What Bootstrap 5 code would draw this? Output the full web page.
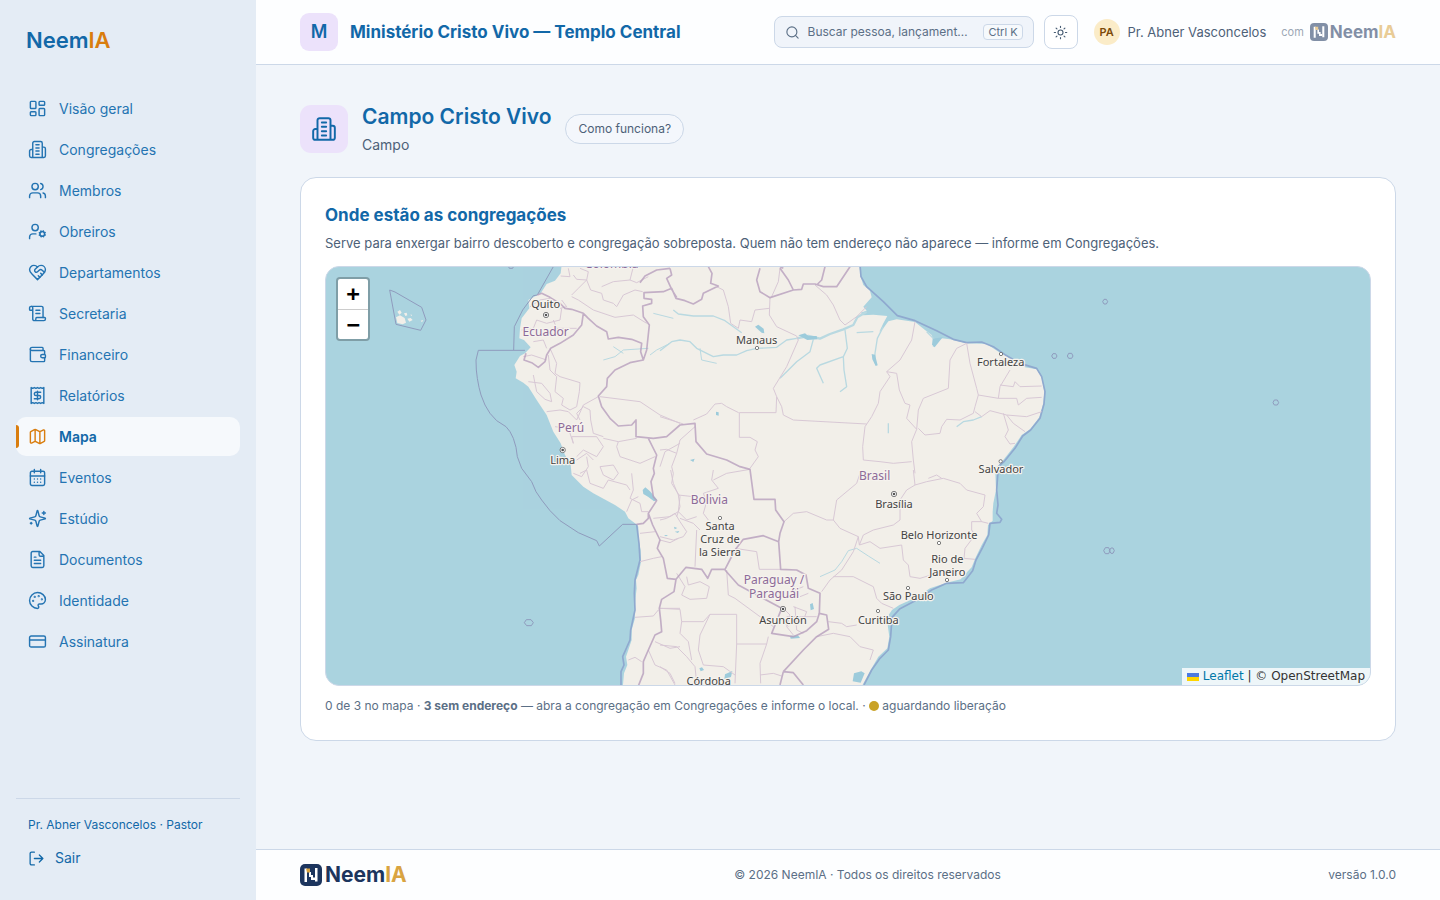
<!DOCTYPE html>
<html lang="pt-BR">
<head>
<meta charset="utf-8">
<meta name="viewport" content="width=device-width, initial-scale=1">
<title>Mapa · NeemIA</title>
<link href="https://cdn.jsdelivr.net/npm/bootstrap@5.3.0/dist/css/bootstrap.min.css" rel="stylesheet">
<style>
:root{--azul:#1268a8;--linha:#ccd8e8;--texto:#4d6178;--fundo:#f1f5fa;--laranja:#d97d0e;--marinho:#1c355e;--ouro:#d9a441}
body{font-family:Inter,"Liberation Sans",sans-serif;font-size:14px;line-height:20px;color:var(--texto);background:var(--fundo)}
a{text-decoration:none;color:inherit}
.ico{width:19px;height:19px;flex:none;fill:none;stroke:currentColor;stroke-width:1.8;stroke-linecap:round;stroke-linejoin:round}
.ico-sm{width:15px;height:15px}
.titulo{font-family:Inter,sans-serif;font-weight:600;color:var(--azul);margin:0}
/* menu lateral */
.lateral{width:256px;flex:none;height:100vh;top:0;background:#e4ecf5;color:var(--azul);padding:24px 16px}
.marca{font-size:22px;line-height:32px;font-weight:600;padding-left:10px;margin-bottom:33px}
.laranja{color:var(--laranja)}
.menu{gap:2px}
.menu a{display:flex;align-items:center;gap:12px;height:39px;padding:0 12px;border-radius:10px;position:relative;color:#2474b2}
.menu a.ativo{background:#f6f9fc;color:var(--azul);font-weight:600}
.menu a.ativo .ico{color:var(--laranja)}
.menu a.ativo::before{content:"";position:absolute;left:0;top:8px;bottom:8px;width:3px;border-radius:0 3px 3px 0;background:var(--laranja)}
.conta{border-top:1px solid var(--linha);padding:16px 12px 8px;font-size:12px}
.sair{border:0;background:none;color:inherit;padding:0;font-size:14px;margin-top:13px;gap:10px}
.sair .ico{width:17px;height:17px}
/* topo */
.topo{height:65px;padding:0 44px;background:#fdfeff;border-bottom:1px solid var(--linha)}
.inicial{width:38px;height:38px;border-radius:9px;background:#ece2fb;color:var(--azul);font-size:18px;font-weight:600}
.igreja{font-size:17px;font-weight:700}
.busca{width:260px;height:32px;border:1px solid var(--linha);border-radius:8px;background:#f0f4fa;color:#5b6f86;font-size:12px;padding:0 10px;gap:8px}
.tecla{border:1px solid var(--linha);border-radius:4px;font-family:inherit;font-size:11px;line-height:14px;padding:0 4px;background:#f6f9fc;color:inherit}
.tema{width:34px;height:34px;border:1px solid var(--linha);border-radius:8px;background:#fff;color:#475c73;padding:0;margin:0 16px 0 10px}
.avatar{width:26px;height:26px;border-radius:50%;background:#fbecc8;color:#7c4a09;font-size:11px;font-weight:600}
.pessoa{font-size:13px}
.assinado{opacity:.55;font-size:11px;gap:6px;margin-left:15px}
.logo{font-weight:700;color:var(--marinho);font-size:21px;line-height:22px;gap:3px}
.logo svg{width:22px;height:22px}
.logo b{color:var(--ouro);font-weight:700}
.logo-sm{font-size:17px;gap:2px}
.logo-sm svg{width:18px;height:18px}
/* conteúdo */
.conteudo{padding:38px 44px 40px}
.selo{width:48px;height:48px;border-radius:11px;background:#ece2fb;color:var(--azul)}
.selo .ico{width:26px;height:26px}
.h-campo{font-size:21px;line-height:28px}
.cabeca{gap:14px}
.ajuda{height:30px;border:1px solid var(--linha);border-radius:15px;background:#f4f7fc;color:var(--texto);font-size:12px;padding:0 12px}
.painel{background:#fff;border:1px solid var(--linha);border-radius:16px;padding:24px;margin-top:22px}
.h-secao{font-size:17px;line-height:26px;font-weight:700}
.intro{font-size:13px;line-height:22px;margin:4px 0 12px}
.mapa{height:420px;border:1px solid var(--linha);border-radius:14px;overflow:hidden;background:#aad3df}
.mapa>svg{width:100%;height:100%;display:block}
.zoomer{left:10px;top:10px;border:2px solid rgba(0,0,0,.25);border-radius:4px;background-clip:padding-box;background-color:#fff}
.zoomer button{display:block;width:30px;height:30px;border:0;padding:0;background:none;color:#000;font:bold 22px/28px "DejaVu Sans Mono",monospace}
.zoomer button+button{border-top:1px solid #ccc}
.credito{right:0;bottom:0;background:rgba(255,255,255,.8);color:#333;font:12px/17px "DejaVu Sans",sans-serif;padding:0 5px}
.credito a{color:#0078a8}
.resumo{font-size:12px;margin:10px 0 0;color:#5b6f86}
.ponto{display:inline-block;width:10px;height:10px;border-radius:50%;background:#c9a227;vertical-align:-1px}
.rodape{height:51px;padding:0 44px;background:#fdfeff;border-top:1px solid var(--linha);color:#5b6f86;font-size:12px}
/* camadas do mapa */
.terra{fill:#f2efe9}
.costa{fill:none;stroke:#8fa9cf;stroke-width:5;stroke-linejoin:round}
.mar{fill:none;stroke:#8f9bbd;stroke-width:3;stroke-linejoin:round}
.pais{fill:none;stroke:#b79fbd;stroke-width:5;stroke-linejoin:round;opacity:.8}
.uf{fill:none;stroke:#d8c8d5;stroke-width:3;stroke-linejoin:round}
.rio{fill:none;stroke:#b9d9e1;stroke-width:4;stroke-linejoin:round}
.agua{fill:#9dcbdb}
.cidade{font:33px "Noto Sans",sans-serif;fill:#444;text-anchor:middle;paint-order:stroke;stroke:#f6f3ee;stroke-width:7;stroke-linejoin:round}
.nacao{font:36px "Noto Sans",sans-serif;fill:#8d6b99;text-anchor:middle;paint-order:stroke;stroke:#f6f3ee;stroke-width:7}
.sede{fill:#fff;stroke:#666;stroke-width:2.5}
</style>
</head>
<body>
<svg class="d-none" aria-hidden="true">
<symbol id="i-painel" viewBox="0 0 24 24"><rect width="7" height="9" x="3" y="3" rx="1"/><rect width="7" height="5" x="14" y="3" rx="1"/><rect width="7" height="9" x="14" y="12" rx="1"/><rect width="7" height="5" x="3" y="16" rx="1"/></symbol>
<symbol id="i-predio" viewBox="0 0 24 24"><path d="M6 22V4a2 2 0 0 1 2-2h8a2 2 0 0 1 2 2v18ZM6 12H4a2 2 0 0 0-2 2v6a2 2 0 0 0 2 2h2M18 9h2a2 2 0 0 1 2 2v9a2 2 0 0 1-2 2h-2M10 6h4M10 10h4M10 14h4M10 18h4"/></symbol>
<symbol id="i-pessoas" viewBox="0 0 24 24"><path d="M16 21v-2a4 4 0 0 0-4-4H6a4 4 0 0 0-4 4v2M22 21v-2a4 4 0 0 0-3-3.87M16 3.13a4 4 0 0 1 0 7.75"/><circle cx="9" cy="7" r="4"/></symbol>
<symbol id="i-obreiro" viewBox="0 0 24 24"><circle cx="18" cy="15" r="3"/><circle cx="9" cy="7" r="4"/><path d="M10 15H6a4 4 0 0 0-4 4v2M21.7 16.4l-.9-.3M15.2 13.9l-.9-.3M16.6 18.7l.3-.9M19.1 12.2l.3-.9M19.6 18.7l-.4-1M16.8 12.3l-.4-1M14.3 16.6l1-.4M20.7 13.8l1-.4"/></symbol>
<symbol id="i-coracao" viewBox="0 0 24 24"><path d="M19 14c1.49-1.46 3-3.21 3-5.5A5.5 5.5 0 0 0 16.5 3c-1.76 0-3 .5-4.5 2-1.5-1.5-2.74-2-4.5-2A5.5 5.5 0 0 0 2 8.5c0 2.3 1.5 4.05 3 5.5l7 7Z"/><path d="M12 5 9.04 7.96a2.17 2.17 0 0 0 0 3.08c.82.82 2.13.85 3 .07l2.07-1.9a2.82 2.82 0 0 1 3.79 0l2.96 2.66M18 15l-2-2M15 18l-2-2"/></symbol>
<symbol id="i-rolo" viewBox="0 0 24 24"><path d="M15 12h-5M15 8h-5M19 17V5a2 2 0 0 0-2-2H4"/><path d="M8 21h12a2 2 0 0 0 2-2v-1a1 1 0 0 0-1-1H11a1 1 0 0 0-1 1v1a2 2 0 1 1-4 0V5a2 2 0 1 0-4 0v2a1 1 0 0 0 1 1h3"/></symbol>
<symbol id="i-carteira" viewBox="0 0 24 24"><path d="M19 7V4a1 1 0 0 0-1-1H5a2 2 0 0 0 0 4h15a1 1 0 0 1 1 1v4h-3a2 2 0 0 0 0 4h3a1 1 0 0 0 1-1v-2a1 1 0 0 0-1-1"/><path d="M3 5v14a2 2 0 0 0 2 2h15a1 1 0 0 0 1-1v-4"/></symbol>
<symbol id="i-recibo" viewBox="0 0 24 24"><path d="M4 2v20l2-1 2 1 2-1 2 1 2-1 2 1 2-1 2 1V2l-2 1-2-1-2 1-2-1-2 1-2-1-2 1Z"/><path d="M16 8h-6a2 2 0 1 0 0 4h4a2 2 0 1 1 0 4H8M12 17.5v-11"/></symbol>
<symbol id="i-mapa" viewBox="0 0 24 24"><path d="M14.106 5.553a2 2 0 0 0 1.788 0l3.659-1.83A1 1 0 0 1 21 4.619v12.764a1 1 0 0 1-.553.894l-4.553 2.277a2 2 0 0 1-1.788 0l-4.212-2.106a2 2 0 0 0-1.788 0l-3.659 1.83A1 1 0 0 1 3 19.381V6.618a1 1 0 0 1 .553-.894l4.553-2.277a2 2 0 0 1 1.788 0zM15 5.764v15M9 3.236v15"/></symbol>
<symbol id="i-agenda" viewBox="0 0 24 24"><path d="M8 2v4M16 2v4M3 10h18M8 14h.01M12 14h.01M16 14h.01M8 18h.01M12 18h.01M16 18h.01"/><rect width="18" height="18" x="3" y="4" rx="2"/></symbol>
<symbol id="i-brilho" viewBox="0 0 24 24"><path d="M9.937 15.5A2 2 0 0 0 8.5 14.063l-6.135-1.582a.5.5 0 0 1 0-.962L8.5 9.936A2 2 0 0 0 9.937 8.5l1.582-6.135a.5.5 0 0 1 .963 0L14.063 8.5A2 2 0 0 0 15.5 9.937l6.135 1.581a.5.5 0 0 1 0 .964L15.5 14.063a2 2 0 0 0-1.437 1.437l-1.582 6.135a.5.5 0 0 1-.963 0zM20 3v4M22 5h-4M4 17v2M5 18H3"/></symbol>
<symbol id="i-doc" viewBox="0 0 24 24"><path d="M15 2H6a2 2 0 0 0-2 2v16a2 2 0 0 0 2 2h12a2 2 0 0 0 2-2V7ZM14 2v4a2 2 0 0 0 2 2h4M10 9H8M16 13H8M16 17H8"/></symbol>
<symbol id="i-paleta" viewBox="0 0 24 24"><path d="M12 2C6.5 2 2 6.500 2 12s4.500 10 10 10c.926 0 1.648-.746 1.648-1.688 0-.437-.18-.835-.437-1.125-.29-.289-.438-.652-.438-1.125a1.640 1.640 0 0 1 1.668-1.668h1.996c3.051 0 5.555-2.503 5.555-5.554C21.965 6.012 17.461 2 12 2z"/><circle cx="13.500" cy="6.500" r=".5"/><circle cx="17.500" cy="10.500" r=".5"/><circle cx="8.500" cy="7.500" r=".5"/><circle cx="6.500" cy="12.500" r=".5"/></symbol>
<symbol id="i-cartao" viewBox="0 0 24 24"><rect width="20" height="14" x="2" y="5" rx="2"/><path d="M2 10h20"/></symbol>
<symbol id="i-sair" viewBox="0 0 24 24"><path d="M9 21H5a2 2 0 0 1-2-2V5a2 2 0 0 1 2-2h4M16 17l5-5-5-5M21 12H9"/></symbol>
<symbol id="i-lupa" viewBox="0 0 24 24"><circle cx="11" cy="11" r="8"/><path d="m21 21-4.300-4.300"/></symbol>
<symbol id="i-sol" viewBox="0 0 24 24"><circle cx="12" cy="12" r="4"/><path d="M12 2v2M12 20v2M4.930 4.930l1.410 1.410M17.660 17.660l1.410 1.410M2 12h2M20 12h2M6.340 17.660l-1.410 1.410M19.070 4.930l-1.410 1.410"/></symbol>
<symbol id="i-neem" viewBox="0 0 22 22"><rect width="22" height="22" rx="5" fill="#1c355e"/><path d="M4.500 4.500h2.500v13.500h-2.500zM15 4h2.500v13.500h-2.500z" fill="#fff"/><path d="M9 8h2v3h2v2.500h2v2.500h-4v-3h-2z" fill="#fff"/><path d="M6 4.500h4v4h-3z" fill="#d9a441"/></symbol>
</svg>

<div class="d-flex">
<aside class="lateral position-sticky d-flex flex-column">
  <a href="#" class="marca">Neem<span class="laranja">IA</span></a>
  <nav class="menu nav flex-column flex-nowrap" aria-label="Principal">
    <a href="#"><svg class="ico"><use href="#i-painel"/></svg>Visão geral</a>
    <a href="#"><svg class="ico"><use href="#i-predio"/></svg>Congregações</a>
    <a href="#"><svg class="ico"><use href="#i-pessoas"/></svg>Membros</a>
    <a href="#"><svg class="ico"><use href="#i-obreiro"/></svg>Obreiros</a>
    <a href="#"><svg class="ico"><use href="#i-coracao"/></svg>Departamentos</a>
    <a href="#"><svg class="ico"><use href="#i-rolo"/></svg>Secretaria</a>
    <a href="#"><svg class="ico"><use href="#i-carteira"/></svg>Financeiro</a>
    <a href="#"><svg class="ico"><use href="#i-recibo"/></svg>Relatórios</a>
    <a href="#" class="ativo" aria-current="page"><svg class="ico"><use href="#i-mapa"/></svg>Mapa</a>
    <a href="#"><svg class="ico"><use href="#i-agenda"/></svg>Eventos</a>
    <a href="#"><svg class="ico"><use href="#i-brilho"/></svg>Estúdio</a>
    <a href="#"><svg class="ico"><use href="#i-doc"/></svg>Documentos</a>
    <a href="#"><svg class="ico"><use href="#i-paleta"/></svg>Identidade</a>
    <a href="#"><svg class="ico"><use href="#i-cartao"/></svg>Assinatura</a>
  </nav>
  <div class="conta mt-auto">
    <div>Pr. Abner Vasconcelos · Pastor</div>
    <button type="button" class="sair d-flex align-items-center"><svg class="ico"><use href="#i-sair"/></svg>Sair</button>
  </div>
</aside>

<div class="flex-grow-1 d-flex flex-column min-vh-100 overflow-hidden">
  <header class="topo d-flex align-items-center">
    <span class="inicial d-flex align-items-center justify-content-center me-2">M</span>
    <p class="titulo igreja ms-1 me-auto text-nowrap">Ministério Cristo Vivo — Templo Central</p>
    <button type="button" class="busca d-flex align-items-center"><svg class="ico ico-sm"><use href="#i-lupa"/></svg><span class="me-auto text-nowrap">Buscar pessoa, lançament…</span><kbd class="tecla">Ctrl K</kbd></button>
    <button type="button" class="tema d-flex align-items-center justify-content-center" aria-label="Tema"><svg class="ico ico-sm"><use href="#i-sol"/></svg></button>
    <span class="avatar d-flex align-items-center justify-content-center me-2">PA</span>
    <span class="pessoa text-nowrap">Pr. Abner Vasconcelos</span>
    <span class="assinado d-flex align-items-center">com <span class="logo logo-sm d-flex align-items-center"><svg><use href="#i-neem"/></svg><span>Neem<b>IA</b></span></span></span>
  </header>

  <main class="conteudo flex-grow-1">
    <div class="cabeca d-flex align-items-center">
      <span class="selo d-flex align-items-center justify-content-center"><svg class="ico"><use href="#i-predio"/></svg></span>
      <div><h1 class="titulo h-campo">Campo Cristo Vivo</h1><div class="mt-1">Campo</div></div>
      <button type="button" class="ajuda">Como funciona?</button>
    </div>

    <section class="painel">
      <h2 class="titulo h-secao">Onde estão as congregações</h2>
      <p class="intro">Serve para enxergar bairro descoberto e congregação sobreposta. Quem não tem endereço não aparece — informe em Congregações.</p>
      <div class="mapa position-relative">
        <svg viewBox="18 21 3132 1254" preserveAspectRatio="xMidYMid slice" role="img" aria-label="Mapa da América do Sul">
          <path class="terra" d="M725 15 722 40 705 62 680 72 662 100 625 120 628 145 605 175 600 205 598 235 612 240 632 262 615 280 600 288 583 315 590 335 587 355 610 368 625 380 650 420 680 465 700 515 722 550 735 585 752 615 755 645 790 680 820 700 885 735 915 755 925 775 945 790 955 800 955 840 962 870 963 905 955 945 948 960 950 985 947 1010 943 1060 945 1075 935 1110 935 1140 925 1170 918 1190 922 1215 912 1240 908 1285H1622L1655 1225 1675 1190 1702 1165 1708 1130 1703 1095 1706 1065 1716 1050 1738 1035 1790 1012 1830 985 1880 968 1922 958 1942 935 1955 922 1966 895 1985 855 2002 825 2004 795 2018 782 2018 755 2020 730 2028 690 2026 635 2038 612 2050 600 2080 562 2105 525 2130 508 2158 472 2170 430 2173 395 2165 352 2150 328 2115 322 2085 302 2040 278 2000 252 1940 250 1890 238 1865 235 1842 248 1835 225 1815 210 1785 186 1730 178 1705 184 1690 205 1678 215 1690 190 1702 168 1660 164 1630 166 1622 158 1640 152 1630 140 1655 112 1650 92 1630 75 1622 50 1618 15Z"/>
          <path class="costa" d="M1620 15 1623 50 1640 80 1690 125 1732 167 1785 182 1850 212 1900 238 1940 248 1985 246 2020 260 2055 284 2100 310 2150 325 2165 350 2175 395 2172 432 2160 475 2132 510 2108 528 2085 565 2052 605 2035 620 2030 690 2034 735 2030 760 2045 778 2040 787 2010 790 2006 825 1988 862 1968 900 1958 932 1930 968 1880 970 1835 990 1790 1020 1740 1046 1716 1072 1712 1130 1705 1170 1680 1195 1655 1230 1632 1275M950 793 957 850 960 900 945 960 943 1000 945 1050 932 1110 930 1140 908 1190 912 1215 903 1235 903 1280"/>
          <path class="mar" d="M209 90 225 96 305 142 318 180 302 211 228 193ZM700 20 652 105 640 107 608 150 583 200 581 270M615 271H475L468 300 469 330 472 355 477 382 483 405 495 435 510 460 530 482 558 500 570 515 580 535 588 562 592 590 605 625 635 665 648 695 665 720 690 752 720 782 775 818 830 842 838 858 908 793H950"/>
          <path class="mar" d="M613 1088l6-9 14 0 7 9-6 9-14 0zM565 18l3 7h10l3-7M2195 288l4-7h8l4 7-4 7h-8zM2242 288l4-8h9l4 8-4 7h-9zM2348 125l4-7h7l4 7-4 7h-7zM2859 428l4-8h9l4 8-4 7h-9zM2351 872l5-9h10l4 9-4 9h-10zM2368 872l5-8h6l4 8-4 8h-6z"/>
          <path class="terra" d="M232 155l8-5 5 8-7 6zM228 172l12-6 14 8 4 14-10 5-16-4-2-10zM252 160l8-2 2 8-6 2zM262 176l10-2 6 6-10 5zM270 164l6 0 0 4zM302 182l8-2-4 7z"/>

          <!-- rios e lagos -->
          <g class="rio">
            <path d="M1060 150 1075 162 1120 168 1180 168 1215 182 1240 200 1265 218M1020 272 1055 245 1080 240 1110 245 1130 265 1180 290 1210 285 1250 285 1280 272 1310 265 1370 262 1400 240 1430 235"/>
            <path stroke-width="7" d="M1430 235 1465 228 1500 236 1530 222 1570 208 1600 195 1612 172 1640 155"/>
            <path d="M1480 238 1470 275 1430 305 1400 335 1380 355M1575 210 1582 265 1570 290 1572 330 1580 380 1560 395M1570 290 1500 315 1490 325 1510 370M1610 218 1660 215M1690 200 1672 235 1665 280 1665 310M1820 215 1845 240 1840 260M1910 500 1930 485 1960 480 1985 470M1705 490 1705 520"/>
            <path stroke-width="3" d="M1500 950 1545 930 1565 905 1585 872 1610 865 1645 888 1680 910M850 300 885 290 910 270 985 265M990 285 1010 270 1050 250M1140 265 1145 300 1190 310M1000 160 1060 175M880 260 910 280"/>
          </g>
          <path class="agua" d="M1305 200l10-6 16 12 2 14-8-2zM1655 282l10 2 8 32-6 2-10-20zM968 690l8-8 14 12 12 14 10 12-10 4-18-14-14-8zM1435 226l20-6 10 8 25 0 2 10-30 2zM1838 236l30-4-24 30-8-8zM1110 600l14-4-4 10zM1188 455l8 2 0 10-8-2zM1215 1243l22-10-4 18-20 6zM1138 1225l8-3 6 8-10 4zM1602 1240l22-6 10 6-12 28-24-4zM1410 1128l24-2 6 8-28 2zM1470 1033l8-4 4 18-10 4zM1032 825h12l-6 4zM1062 800l10 4-8 4zM1064 815l14-2-4 6z"/>

          <!-- divisas internas -->
          <g class="uf">
            <path d="M745 25 750 50 722 48M760 45 770 58 800 60 805 35 780 25M755 105 775 85 800 60 812 90 845 100 850 120 880 130 890 140 910 105 945 90 968 95M845 80 880 65 930 60 940 20M930 60 950 68 985 50M755 110 775 120 820 150 885 172 940 165 980 190M720 145 740 140 725 120M630 140 660 120 690 115M605 210 640 205 650 180 680 190 720 180 725 145M640 245 670 240 680 265M700 180 710 205 770 205M610 290 635 285 680 300M690 265 710 310 705 340 720 350 780 368 778 395 770 440 750 450 725 435 730 415 705 395 710 350 690 330 685 285M625 365 665 370 690 400 695 425 675 418 650 395 640 345M720 450 745 455 770 480 790 435 835 410M780 480 770 460 790 440 810 450 812 480 820 520 850 530M680 455 720 450M705 500 745 505 760 550 755 530 830 530 850 560 830 590 790 570 770 590M840 410 960 425 1020 465 1080 490M850 535 895 545 950 535M890 560 900 590 960 610 1005 590M895 545 890 560M800 590 805 620 785 650 760 640M840 620 880 615 895 640 880 660 850 645ZM1080 550 1035 575 1020 620M770 600 800 580 820 600"/>
            <path d="M780 640 800 630 810 670 850 685 865 660 920 675 930 690M935 640 940 690 930 715 960 730 965 755 985 755M920 755 935 720 955 710M960 820 1005 815M960 905 1000 895 1025 890M945 1072 1000 1068 1015 1050M925 1200 945 1192 965 1205M1020 1045H1080M1005 1145 1050 1165 1080 1160M985 1170 1005 1215 1040 1230 1065 1275M1060 640 1055 670 1080 710 1075 755 1050 770 1000 775M1020 840 1050 848 1075 835M1075 755 1100 780 1130 770"/>
          </g>
          <g class="uf" transform="translate(1020 0)">
            <path d="M170 80 190 90 205 140 212 190 235 205 240 180 275 185 285 150 328 145M330 113 328 165 350 200 410 228 415 240 380 320 340 385 350 410 348 458H238V532H270L292 545 285 570 295 590 270 625M236 458 200 440 185 430 165 432 140 462 100 480M350 410 365 440 370 465 400 480 620 492M465 75 500 105 520 135 540 180 555 195 590 170 620 140M765 185 755 240 720 300 680 335 690 350 660 395 655 430 635 470 615 500 608 560 610 600 660 605 700 610 755 605M680 335 710 340 718 390 735 430 750 435 740 475 770 508 755 545 760 600 765 640M770 508 775 450 790 415 865 385 870 300 890 265 920 250 930 310 950 385 955 405 945 440 940 460 900 480 860 478 845 500 840 520 795 525 775 505M955 405 1015 415 1020 380 1050 330M1020 375 1060 380 1065 365 1080 380 1145 378M1015 415 1070 415 1075 435 1100 415 1145 412M945 455 965 470 990 452 1040 465 1100 470 1145 455M1040 465 1060 490 1095 515M1030 460 1045 510 1035 530 1050 552 1065 550M360 25 355 65 335 110M0 470 70 492M0 570 20 568 50 580 35 620 40 640M105 500 60 540 50 580M270 628 200 640 160 660M805 655 830 645 845 655"/>
          </g>
          <g class="uf" transform="translate(1020 630)">
            <path d="M32 0 40 40 55 75 60 110 50 140M160 0 155 30 175 55 130 70 140 95 130 130 145 150M55 75 100 80M0 150 20 145 45 130 60 155 80 185 70 200 40 210 0 200M60 145 100 160 120 180M110 180 105 290M200 300 205 375 225 385 300 440 340 470M225 235 290 245 298 298H360M50 310 75 350 65 375 90 388 140 385 148 350 120 335 85 345 80 320M0 415 60 418 65 455 130 455 150 433H230V522L225 640M230 522H320L325 500M320 522 300 580 302 640M150 433 120 495 115 540 130 585 190 590 225 615M0 525 50 530 80 560 105 590 110 640M65 455 60 490 85 515 95 570M0 590 30 610 45 640M300 615 340 610 365 618M372 155 400 130 440 125 500 150 520 150 530 90 590 40 600 10M520 150 540 175 595 200 598 225M598 225 610 195 640 180 700 165 720 150 720 90 740 60 765 45 760 0M765 45 800 35 850 25 900 40 920 60 975 75 970 110 950 130 965 155 985 160M965 155 935 155 935 180 945 195 915 235 912 265 945 268M598 225 630 215 660 235 725 225 730 270 745 285 750 320 780 325 830 310M595 200 580 245 545 300 510 330 485 365M520 320 580 320 640 350 650 385 665 400 700 415M505 455 545 460 560 470 590 465M470 500 520 490 570 500 600 530 640 540 630 570M380 320 400 330 405 360 430 350M365 410 390 435 380 470 400 495M405 410 410 480 430 490M380 440 470 440M400 410 440 425 430 450M360 445 385 470M420 380 445 370"/>
          </g>

          <!-- fronteiras -->
          <g class="pais">
            <path d="M652 105 665 100 690 112 722 132 735 145 755 148 790 160 805 175 830 198 860 215 865 237 895 232 935 238 965 250 962 275 970 300 930 308 885 330 862 355 860 380 835 408 845 440 870 475 895 498 935 495 948 480 948 530 1000 535 1040 530 1080 495 1125 490 1128 545 1160 582 1220 600 1260 620 1290 628 1302 718H1365L1367 750 1392 785 1380 820 1376 845 1382 928 1430 930 1458 945 1465 985 1500 1000 1498 1060 1520 1065 1526 1108 1490 1130 1450 1170 1390 1235M790 160 785 195 760 225 720 250 692 265 680 285 675 305 655 322 635 308 612 300 618 280M970 300 980 270 988 195 970 170 968 138 995 130 995 118 972 115 972 98 1030 95 1055 85 1068 115 1095 122 1120 132 1145 118 1150 100 1195 78 1172 70 1176 40 1165 20M1070 112 1055 88 1040 55 1055 45 1050 25"/>
            <path d="M960 68 975 48 1010 30 1050 25M985 535 1010 585 1000 625 1003 640 993 665 1000 710 1010 722 985 760 985 775 970 790 950 793M985 760 998 795 1020 840 1012 865 1030 895 1042 955 1068 958 1098 922 1145 928 1163 955 1175 928 1215 928 1245 870 1270 838 1330 827 1376 845M1068 958 1062 995 1025 1018 1018 1045 1022 1080 1025 1115 1005 1125 985 1170 970 1205 970 1240 955 1278M1215 930 1255 975 1320 1010 1385 1045 1355 1120 1420 1130 1460 1112 1490 1085 1498 1060M1390 1235 1420 1238 1450 1275M1390 1235 1380 1275M1320 25 1310 60 1320 95 1350 113 1420 90 1445 88 1450 72 1485 72 1510 80 1550 80 1590 20M1380 25 1405 60 1420 90M1515 20 1505 60 1490 75M1390 25 1380 20"/>
          </g>

          <!-- cidades -->
          <g class="sede">
            <circle cx="678" cy="165" r="8"/><circle cx="728" cy="570" r="8"/><circle cx="1722" cy="702" r="8"/><circle cx="1389" cy="1047" r="8"/>
            <circle cx="1311" cy="264" r="5"/><circle cx="2043" cy="282" r="5"/><circle cx="2042" cy="604" r="5"/><circle cx="1200" cy="774" r="5"/><circle cx="1857" cy="849" r="5"/><circle cx="1881" cy="960" r="5"/><circle cx="1764" cy="984" r="5"/><circle cx="1674" cy="1053" r="5"/>
          </g>
          <g fill="#555"><circle cx="678" cy="165" r="4"/><circle cx="728" cy="570" r="4"/><circle cx="1722" cy="702" r="4"/><circle cx="1389" cy="1047" r="4"/></g>
          <g class="nacao">
            <text x="875" y="24">Colombia</text><text x="677" y="229">Ecuador</text><text x="753" y="516">Perú</text><text x="1168" y="731">Bolivia</text><text x="1664" y="661">Brasil</text><text><tspan x="1362" y="972">Paraguay /</tspan><tspan x="1362" y="1013">Paraguái</tspan></text>
          </g>
          <g class="cidade">
            <text x="677" y="145">Quito</text><text x="728" y="612">Lima</text><text x="1310" y="251">Manaus</text><text x="2042" y="318">Fortaleza</text><text x="2043" y="640">Salvador</text><text x="1722" y="743">Brasília</text><text><tspan x="1200" y="811">Santa</tspan><tspan x="1200" y="850">Cruz de</tspan><tspan x="1200" y="889">la Sierra</tspan></text><text x="1857" y="838">Belo Horizonte</text><text><tspan x="1882" y="909">Rio de</tspan><tspan x="1882" y="948">Janeiro</tspan></text><text x="1765" y="1021">São Paulo</text><text x="1675" y="1092">Curitiba</text><text x="1389" y="1092">Asunción</text><text x="1166" y="1275">Córdoba</text>
          </g>
        </svg>
        <div class="zoomer position-absolute"><button type="button" aria-label="Aproximar">+</button><button type="button" aria-label="Afastar">−</button></div>
        <div class="credito position-absolute"><a href="#"><svg width="12" height="8" viewBox="0 0 12 8" class="me-1"><path fill="#4c7be1" d="M0 0h12v4H0z"/><path fill="#ffd500" d="M0 4h12v4H0z"/></svg>Leaflet</a> | © OpenStreetMap</div>
      </div>
      <p class="resumo">0 de 3 no mapa · <strong>3 sem endereço</strong> — abra a congregação em Congregações e informe o local. · <span class="ponto"></span> aguardando liberação</p>
    </section>
  </main>

  <footer class="rodape d-flex align-items-center justify-content-between">
    <span class="logo d-flex align-items-center"><svg><use href="#i-neem"/></svg><span>Neem<b>IA</b></span></span>
    <span>© 2026 NeemIA · Todos os direitos reservados</span>
    <span>versão 1.0.0</span>
  </footer>
</div>
</div>
<script src="https://cdn.jsdelivr.net/npm/bootstrap@5.3.0/dist/js/bootstrap.bundle.min.js"></script>
</body>
</html>
